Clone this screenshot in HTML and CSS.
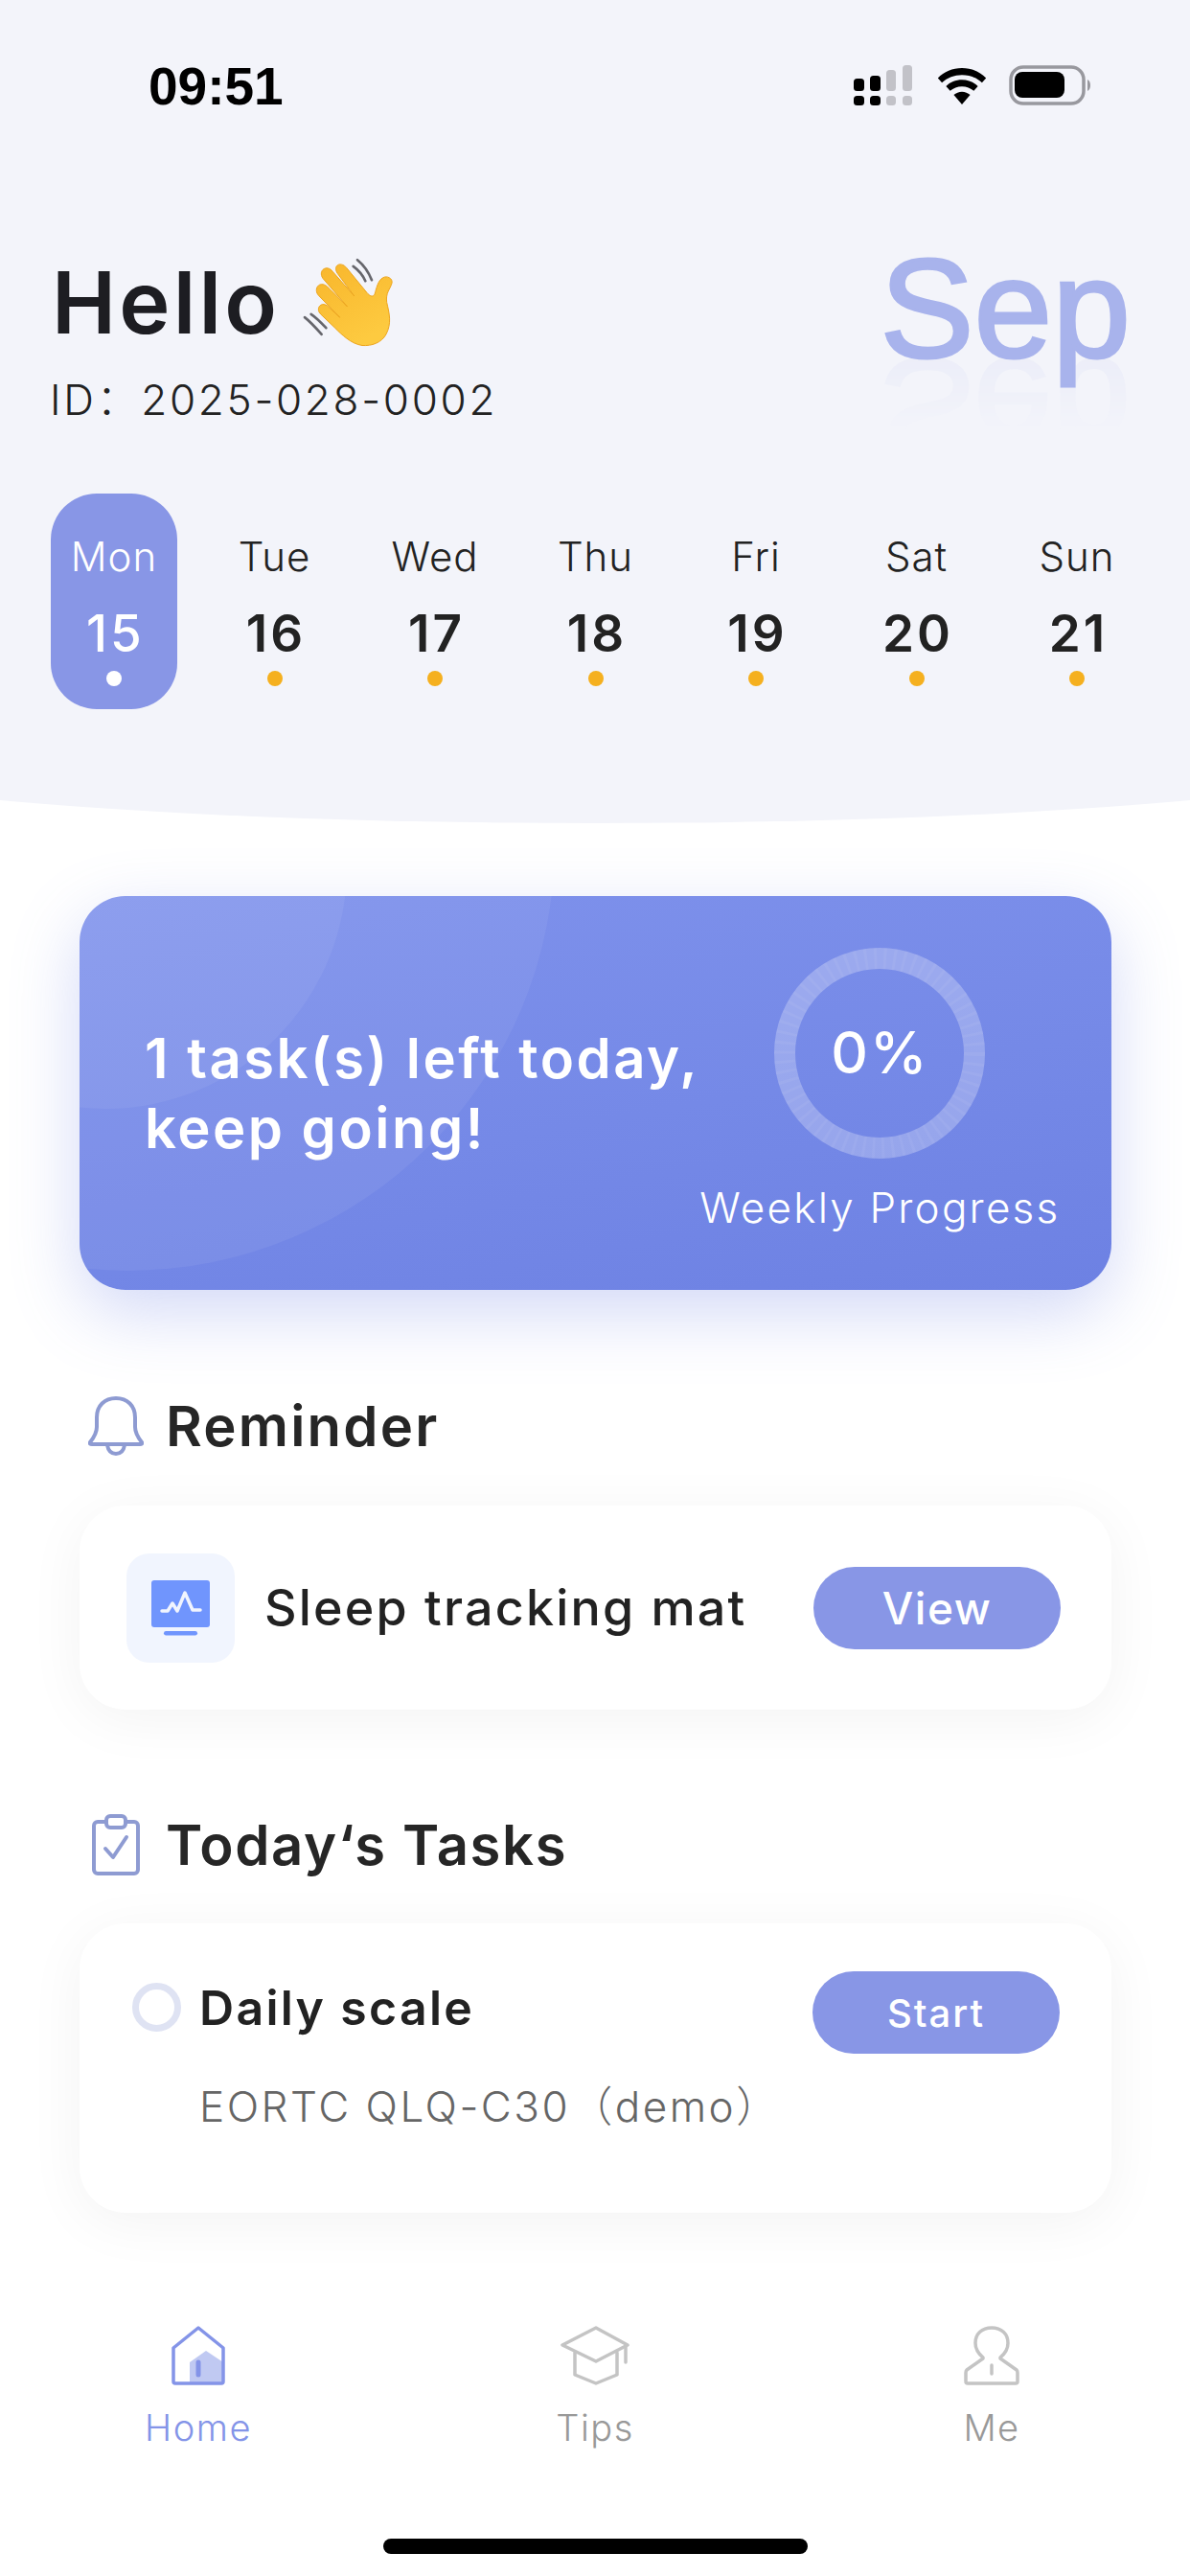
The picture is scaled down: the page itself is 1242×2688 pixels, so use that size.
FILE: index.html
```html
<!DOCTYPE html>
<html lang="en">
<head>
    <meta charset="UTF-8">
    <meta name="viewport" content="width=device-width, initial-scale=1.0">
    <title>Home</title>
    <link rel="stylesheet" href="styles.css">
</head>
<body>
<div class="page">

    <!-- Top area with status bar, greeting and week strip -->
    <header class="top">
        <div class="status-bar">
            <span class="time">09:51</span>
            <div class="status-icons">
                <svg width="64" height="42" viewBox="0 0 64 42">
                    <g fill="#000">
                        <rect x="0" y="14" width="11" height="13" rx="3.500"/><rect x="0" y="32" width="11" height="10" rx="3.500"/>
                        <rect x="17" y="11" width="11" height="16" rx="3.500"/><rect x="17" y="32" width="11" height="10" rx="3.500"/>
                    </g>
                    <g fill="#c2c2c8">
                        <rect x="34" y="5" width="10" height="22" rx="3.500"/><rect x="34" y="32" width="10" height="10" rx="3.500"/>
                        <rect x="51" y="0" width="10" height="27" rx="3.500"/><rect x="51" y="32" width="10" height="10" rx="3.500"/>
                    </g>
                </svg>
                <svg class="wifi" width="54" height="38" viewBox="0 0 54 40">
                    <path d="M27 0C16.500 0 7.500 4 0.500 11L5 16C11 10.500 18.500 7.500 27 7.500S43 10.500 49 16L53.500 11C46.500 4 37.500 0 27 0Z"/>
                    <path d="M27 13C20 13 14 15.500 9.500 20L14 25C17.500 22 22 20.200 27 20.200S36.500 22 40 25L44.500 20C40 15.500 34 13 27 13Z"/>
                    <path d="M27 26C23.500 26 20.500 27.300 18 29.500L27 40L36 29.500C33.500 27.300 30.500 26 27 26Z"/>
                </svg>
                <svg width="86" height="42" viewBox="0 0 86 42">
                    <rect x="2" y="2" width="76" height="38" rx="13" fill="none" stroke="#98989e" stroke-width="3.500"/>
                    <rect x="6" y="7" width="52" height="27" rx="8" fill="#000"/>
                    <path d="M82 15C84 16 85 18 85 21S84 26 82 27Z" fill="#98989e"/>
                </svg>
            </div>
        </div>

        <div class="greeting">
            <div>
                <div class="hello">
                    <span>Hello</span>
                    <svg class="wave" width="100" height="97" viewBox="40 80 300 290">
                        <defs>
                            <linearGradient id="handFill" x1="0" y1="0" x2="0.5" y2="1">
                                <stop offset="0" stop-color="#f8b62c"/>
                                <stop offset="1" stop-color="#fdca40"/>
                            </linearGradient>
                        </defs>
                        <path d="M207 112C225 125 237 140 245 158M220 92C240 108 255 130 265 155M55 272C72 285 90 305 108 325M75 262C90 272 108 290 122 305" fill="none" stroke="#66666c" stroke-width="8" stroke-linecap="round"/>
                        <path d="M235 360C200 355 170 325 150 305L105 262C88 245 105 222 125 235L165 272L100 205C80 185 100 155 125 175L188 238L112 150C95 125 125 105 142 128L210 205L158 135C140 108 170 95 187 118L250 195C258 205 268 210 274 200C280 180 285 155 300 148C312 140 332 150 328 165C322 185 308 195 312 225C320 260 328 290 310 325C295 352 265 362 235 360Z" fill="url(#handFill)" stroke="#eda51d" stroke-width="3"/>
                    </svg>
                </div>
                <div class="user-id">ID：2025-028-0002</div>
            </div>
            <div class="month">Sep</div>
        </div>

        <div class="week">
            <div class="day active"><span class="day-name">Mon</span><span class="day-num">15</span><i class="dot"></i></div>
            <div class="day"><span class="day-name">Tue</span><span class="day-num">16</span><i class="dot"></i></div>
            <div class="day"><span class="day-name">Wed</span><span class="day-num">17</span><i class="dot"></i></div>
            <div class="day"><span class="day-name">Thu</span><span class="day-num">18</span><i class="dot"></i></div>
            <div class="day"><span class="day-name">Fri</span><span class="day-num">19</span><i class="dot"></i></div>
            <div class="day"><span class="day-name">Sat</span><span class="day-num">20</span><i class="dot"></i></div>
            <div class="day"><span class="day-name">Sun</span><span class="day-num">21</span><i class="dot"></i></div>
        </div>
    </header>

    <main class="content">
        <!-- Progress banner -->
        <section class="banner">
            <div class="banner-text">1 task(s) left today,<br>keep going!</div>
            <div class="progress">
                <div class="ring">
                    <svg width="220" height="220" viewBox="0 0 220 220">
                        <circle cx="110" cy="110" r="99" fill="none" stroke="#fff" stroke-opacity=".26" stroke-width="22"/>
                        <circle cx="110" cy="110" r="99" fill="none" stroke="#fff" stroke-opacity=".05" stroke-width="22" stroke-dasharray="3 7"/>
                    </svg>
                    <span class="ring-value">0%</span>
                </div>
                <div class="progress-label">Weekly Progress</div>
            </div>
        </section>

        <!-- Reminder -->
        <h2 class="section-title">
            <svg width="58" height="62" viewBox="0 0 58 62" fill="none" stroke="#8e9bd2" stroke-width="4" stroke-linejoin="round" stroke-linecap="round">
                <path d="M29 2C17 2 9 10 9 22V32C9 38 6 43 2 48C1.500 49.500 2 50 4 50H54C56 50 56.500 49.500 56 48C52 43 49 38 49 32V22C49 10 41 2 29 2Z"/>
                <path d="M20 51C21 57 24 60 29 60S37 57 38 51"/>
            </svg>
            <span>Reminder</span>
        </h2>
        <div class="card reminder-card">
            <div class="device-tile">
                <svg width="61" height="58" viewBox="0 0 61 58">
                    <rect x="0" y="0" width="61" height="49" rx="3" fill="#7095fd"/>
                    <rect x="13" y="53" width="35" height="4.500" rx="2.200" fill="#7095fd"/>
                    <path d="M11 32H17L22 24L27 32L35 13L43 31H51" fill="none" stroke="#f1f5fe" stroke-width="3.500" stroke-linecap="round" stroke-linejoin="round"/>
                </svg>
            </div>
            <span class="device-name">Sleep tracking mat</span>
            <button class="pill-btn view-btn">View</button>
        </div>

        <!-- Tasks -->
        <h2 class="section-title tasks-title">
            <svg width="50" height="64" viewBox="0 0 50 64" fill="none" stroke="#8e9bd2" stroke-width="4" stroke-linejoin="round" stroke-linecap="round">
                <rect x="2" y="8" width="46" height="54" rx="4"/>
                <rect x="15" y="2" width="20" height="12" rx="4" fill="#fff"/>
                <path d="M14 36L22 45L36 24"/>
            </svg>
            <span>Today‘s Tasks</span>
        </h2>
        <div class="card task-card">
            <div class="task-row">
                <i class="radio"></i>
                <span class="task-name">Daily scale</span>
                <button class="pill-btn start-btn">Start</button>
            </div>
            <div class="task-sub">EORTC QLQ-C30（demo）</div>
        </div>
    </main>

    <!-- Bottom tab bar -->
    <nav class="tabbar">
        <div class="tab active">
            <svg width="58" height="62" viewBox="0 0 58 62" fill="none" stroke="#8494e8" stroke-width="3.500" stroke-linejoin="round" stroke-linecap="round">
                <path d="M20 60V38L37 26L55 38V60Z" fill="#c0c9f2" stroke="none"/>
                <path d="M29 2L3 23V58C3 59.500 3.500 60 5 60H53C54.500 60 55 59.500 55 58V23Z"/>
                <path d="M29 38V51" stroke-width="5"/>
            </svg>
            <span>Home</span>
        </div>
        <div class="tab">
            <svg width="72" height="62" viewBox="0 0 72 62" fill="none" stroke="#c4c4c4" stroke-width="3.500" stroke-linejoin="round" stroke-linecap="round">
                <path d="M37 2L2 20L37 37L70 20Z"/>
                <path d="M15 28V51L37 60L59 51V28"/>
                <path d="M68 21V38"/>
            </svg>
            <span>Tips</span>
        </div>
        <div class="tab">
            <svg width="58" height="62" viewBox="0 0 58 62" fill="none" stroke="#c4c4c4" stroke-width="3.500" stroke-linejoin="round" stroke-linecap="round">
                <path d="M20 33C14 28 12 24 12 18C12 8 19 2 29 2C39 2 46 8 46 18C46 24 44 28 38 33L38 34L55 46Q56 47 56 49V58Q56 60 54 60H4Q2 60 2 58V49Q2 47 3 46L20 34Z"/>
                <path d="M29 41V50"/>
            </svg>
            <span>Me</span>
        </div>
    </nav>
    <div class="home-bar"></div>
</div>
</body>
</html>
```

FILE: styles.css
```css
* {
    box-sizing: border-box;
}

body {
    margin: 0;
    background: #fff;
    font-family: Inter, "Noto Sans CJK SC", sans-serif;
    color: #222;
}

.page {
    width: 1242px;
    height: 2688px;
    overflow: hidden;
    position: relative;
    display: flex;
    flex-direction: column;
}

/* Top area */
.top {
    height: 835px;
    background: #f3f4fa;
    position: relative;
    flex-shrink: 0;
}

/* curved lower edge */
.top::after {
    content: "";
    position: absolute;
    left: -279px;
    right: -279px;
    bottom: -24px;
    height: 100px;
    background: #f3f4fa;
    border-radius: 0 0 50% 50% / 0 0 87px 87px;
    z-index: 0;
}

.top > * {
    position: relative;
    z-index: 1;
}

.status-bar {
    display: flex;
    justify-content: space-between;
    align-items: flex-start;
    padding: 63px 103px 0 155px;
    height: 260px;
}

.time {
    font-family: "Liberation Sans", sans-serif;
    font-weight: 700;
    font-size: 55px;
    line-height: 54px;
    color: #000;
}

.status-icons {
    display: flex;
    align-items: flex-start;
    gap: 22px;
    padding-top: 5px;
}

.wifi {
    margin-top: 3px;
}

.greeting {
    display: flex;
    justify-content: space-between;
    padding: 0 62px 0 54px;
    height: 255px;
}

.hello {
    display: flex;
    align-items: center;
    gap: 21px;
    height: 110px;
    font-size: 90px;
    font-weight: 600;
    letter-spacing: 3.200px;
    color: #1d1d22;
}

.user-id {
    margin-top: 20px;
    margin-left: -2px;
    font-size: 44px;
    line-height: 54px;
    font-weight: 300;
    letter-spacing: 2.700px;
    color: #222;
}

.month {
    font-family: "Liberation Sans", sans-serif;
    font-size: 147px;
    line-height: 147px;
    height: 140px;
    color: #a8b3ec;
    -webkit-text-stroke: 3px #a8b3ec;
    margin-top: -11px;
    -webkit-box-reflect: below -30px linear-gradient(transparent 35%, rgba(255, 255, 255, .1));
}

.week {
    display: flex;
    justify-content: space-between;
    padding: 0 52px 0 53px;
}

.day {
    width: 132px;
    height: 225px;
    border-radius: 48px;
    display: flex;
    flex-direction: column;
    align-items: center;
    padding-top: 41px;
}

.day-name {
    font-size: 42px;
    line-height: 50px;
    font-weight: 300;
    letter-spacing: 1px;
}

.day-num {
    margin-top: 23px;
    padding-left: 3px;
    font-size: 53px;
    line-height: 64px;
    font-weight: 600;
    letter-spacing: 3px;
}

.dot {
    width: 16px;
    height: 16px;
    border-radius: 50%;
    background: #f5b01f;
    margin-top: 7px;
}

.day.active {
    background: #8896e6;
    color: #fff;
}

.day.active .day-num {
    font-weight: 500;
}

.day.active .dot {
    background: #fff;
}

/* Main column */
.content {
    flex: 1;
    padding: 100px 82px 0 83px;
    position: relative;
}

.banner {
    height: 411px;
    border-radius: 48px;
    background: linear-gradient(170deg, #7f92ec 0%, #7589e7 55%, #6d81e3 100%);
    box-shadow: 0 24px 70px rgba(110, 128, 227, .3);
    position: relative;
    overflow: hidden;
    display: flex;
    justify-content: space-between;
    color: #fff;
    padding: 54px 54px 0 68px;
}

.banner::before,
.banner::after {
    content: "";
    position: absolute;
    border-radius: 50%;
    background: rgba(255, 255, 255, .06);
}

.banner::before {
    left: -396px;
    top: -501px;
    width: 892px;
    height: 892px;
}

.banner::after {
    left: -225px;
    top: -282px;
    width: 504px;
    height: 504px;
}

.banner-text {
    position: relative;
    z-index: 1;
    margin-top: 79px;
    font-size: 58px;
    line-height: 73px;
    font-weight: 600;
    letter-spacing: 2.500px;
    white-space: nowrap;
}

.progress {
    position: relative;
    z-index: 1;
    display: flex;
    flex-direction: column;
    align-items: center;
}

.ring {
    width: 220px;
    height: 220px;
    position: relative;
    display: flex;
    align-items: center;
    justify-content: center;
}

.ring svg {
    position: absolute;
    left: 0;
    top: 0;
}

.ring-value {
    font-size: 60px;
    font-weight: 500;
    letter-spacing: 2px;
    margin-top: -3px;
}

.progress-label {
    margin-top: 24px;
    font-size: 44px;
    line-height: 54px;
    font-weight: 300;
    letter-spacing: 2.200px;
    white-space: nowrap;
}

.section-title {
    margin: 0;
    display: flex;
    align-items: center;
    height: 62px;
    margin-top: 111px;
    margin-left: 9px;
    gap: 23px;
    font-size: 58px;
    font-weight: 600;
    letter-spacing: 2.200px;
    color: #262626;
}

.card {
    background: #fff;
    border-radius: 48px;
    box-shadow: 0 10px 60px rgba(0, 0, 0, .05);
}

.reminder-card {
    margin-top: 52px;
    height: 213px;
    display: flex;
    align-items: center;
    padding: 0 53px 0 49px;
}

.device-tile {
    width: 113px;
    height: 114px;
    border-radius: 24px;
    background: #f1f5fe;
    display: flex;
    align-items: center;
    justify-content: center;
    margin-right: 31px;
}

.device-name {
    font-size: 52px;
    font-weight: 500;
    letter-spacing: 2.200px;
}

.pill-btn {
    margin-left: auto;
    width: 258px;
    height: 86px;
    border: none;
    border-radius: 43px;
    background: #8896e6;
    color: #fff;
    font-family: inherit;
}

.view-btn {
    font-size: 46px;
    font-weight: 500;
    letter-spacing: 1.500px;
}

.start-btn {
    font-size: 40px;
    font-weight: 500;
    letter-spacing: 2px;
}

.tasks-title {
    margin-top: 110px;
    gap: 27px;
    margin-left: 13px;
    letter-spacing: 1.600px;
}

.task-card {
    margin-top: 51px;
    height: 302px;
    padding: 50px 54px 0 55px;
}

.task-row {
    display: flex;
    align-items: center;
    height: 86px;
}

.radio {
    width: 51px;
    height: 51px;
    border-radius: 50%;
    border: 7px solid #dfe3f3;
    margin-right: 19px;
    margin-top: -12px;
}

.task-name {
    font-size: 50px;
    font-weight: 600;
    margin-top: -10px;
    letter-spacing: 2.300px;
}

.task-sub {
    margin-top: 28px;
    padding-left: 70px;
    font-size: 44px;
    line-height: 54px;
    font-weight: 300;
    letter-spacing: 2.500px;
    color: #666;
}

/* Bottom tab bar */
.tabbar {
    position: absolute;
    left: 0;
    right: 0;
    top: 2390px;
    height: 298px;
    background: #fff;
    display: flex;
    padding-top: 37px;
}

.tab {
    flex: 1;
    display: flex;
    flex-direction: column;
    align-items: center;
    color: #999;
    font-size: 38px;
    font-weight: 300;
    letter-spacing: 1.500px;
}

.tab span {
    margin-top: 21px;
    line-height: 46px;
}

.tab.active {
    color: #8494e8;
}

.home-bar {
    position: absolute;
    left: 400px;
    top: 2649px;
    width: 443px;
    height: 16px;
    border-radius: 8px;
    background: #000;
}
```
